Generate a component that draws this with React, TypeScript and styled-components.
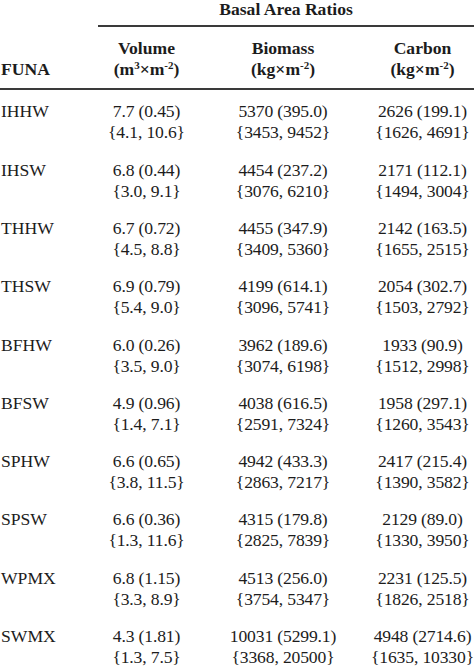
import styled, { createGlobalStyle } from "styled-components";

const GlobalStyle = createGlobalStyle`
  body {
    margin: 0;
    background: #ffffff;
  }
`;

const cols = "98px 97px 176px 103px";

const StyledTable = styled.div`
  width: 474px;
  font-family: "Liberation Serif", "Times New Roman", serif;
  font-size: 17.6px;
  color: #1c1c1c;
`;

const TitleRow = styled.div`
  display: grid;
  grid-template-columns: ${cols};
`;

const Title = styled.div`
  grid-column: 2 / 5;
  text-align: center;
  font-weight: bold;
  line-height: 19px;
  padding-bottom: 6px;
  border-bottom: 2px solid #3a3a3a;
`;

const HeadRow = styled.div`
  display: grid;
  grid-template-columns: ${cols};
  align-items: end;
  padding: 11px 0 8px;
  border-bottom: 2px solid #3a3a3a;
  font-weight: bold;
  line-height: 21px;
`;

const HeadCell = styled.div<{ $left?: boolean }>`
  text-align: ${(p) => (p.$left ? "left" : "center")};
  padding-left: ${(p) => (p.$left ? "1px" : "0")};
`;

const Sup = styled.sup`
  font-size: 11px;
  line-height: 0;
  vertical-align: 6px;
`;

const Body = styled.div`
  display: flex;
  flex-direction: column;
  gap: 16.3px;
  padding-top: 11.4px;
`;

const Row = styled.div`
  display: grid;
  grid-template-columns: ${cols};
  line-height: 21px;
`;

const Name = styled.div`
  padding-left: 1px;
`;

const Cell = styled.div`
  text-align: center;
  white-space: nowrap;
  letter-spacing: -0.15px;
`;

type Stat = [string, string];

const rows: { name: string; vol: Stat; bio: Stat; carb: Stat }[] = [
  { name: "IHHW", vol: ["7.7 (0.45)", "{4.1, 10.6}"], bio: ["5370 (395.0)", "{3453, 9452}"], carb: ["2626 (199.1)", "{1626, 4691}"] },
  { name: "IHSW", vol: ["6.8 (0.44)", "{3.0, 9.1}"], bio: ["4454 (237.2)", "{3076, 6210}"], carb: ["2171 (112.1)", "{1494, 3004}"] },
  { name: "THHW", vol: ["6.7 (0.72)", "{4.5, 8.8}"], bio: ["4455 (347.9)", "{3409, 5360}"], carb: ["2142 (163.5)", "{1655, 2515}"] },
  { name: "THSW", vol: ["6.9 (0.79)", "{5.4, 9.0}"], bio: ["4199 (614.1)", "{3096, 5741}"], carb: ["2054 (302.7)", "{1503, 2792}"] },
  { name: "BFHW", vol: ["6.0 (0.26)", "{3.5, 9.0}"], bio: ["3962 (189.6)", "{3074, 6198}"], carb: ["1933 (90.9)", "{1512, 2998}"] },
  { name: "BFSW", vol: ["4.9 (0.96)", "{1.4, 7.1}"], bio: ["4038 (616.5)", "{2591, 7324}"], carb: ["1958 (297.1)", "{1260, 3543}"] },
  { name: "SPHW", vol: ["6.6 (0.65)", "{3.8, 11.5}"], bio: ["4942 (433.3)", "{2863, 7217}"], carb: ["2417 (215.4)", "{1390, 3582}"] },
  { name: "SPSW", vol: ["6.6 (0.36)", "{1.3, 11.6}"], bio: ["4315 (179.8)", "{2825, 7839}"], carb: ["2129 (89.0)", "{1330, 3950}"] },
  { name: "WPMX", vol: ["6.8 (1.15)", "{3.3, 8.9}"], bio: ["4513 (256.0)", "{3754, 5347}"], carb: ["2231 (125.5)", "{1826, 2518}"] },
  { name: "SWMX", vol: ["4.3 (1.81)", "{1.3, 7.5}"], bio: ["10031 (5299.1)", "{3368, 20500}"], carb: ["4948 (2714.6)", "{1635, 10330}"] },
];

function StatCell({ value }: { value: Stat }) {
  return (
    <Cell>
      {value[0]}
      <br />
      {value[1]}
    </Cell>
  );
}

export default function App() {
  return (
    <>
      <GlobalStyle />
      <StyledTable>
        <TitleRow>
          <Title>Basal Area Ratios</Title>
        </TitleRow>
        <HeadRow>
          <HeadCell $left>FUNA</HeadCell>
          <HeadCell>
            Volume
            <br />
            (m<Sup>3</Sup>×m<Sup>-2</Sup>)
          </HeadCell>
          <HeadCell>
            Biomass
            <br />
            (kg×m<Sup>-2</Sup>)
          </HeadCell>
          <HeadCell>
            Carbon
            <br />
            (kg×m<Sup>-2</Sup>)
          </HeadCell>
        </HeadRow>
        <Body>
          {rows.map((r) => (
            <Row key={r.name}>
              <Name>{r.name}</Name>
              <StatCell value={r.vol} />
              <StatCell value={r.bio} />
              <StatCell value={r.carb} />
            </Row>
          ))}
        </Body>
      </StyledTable>
    </>
  );
}
